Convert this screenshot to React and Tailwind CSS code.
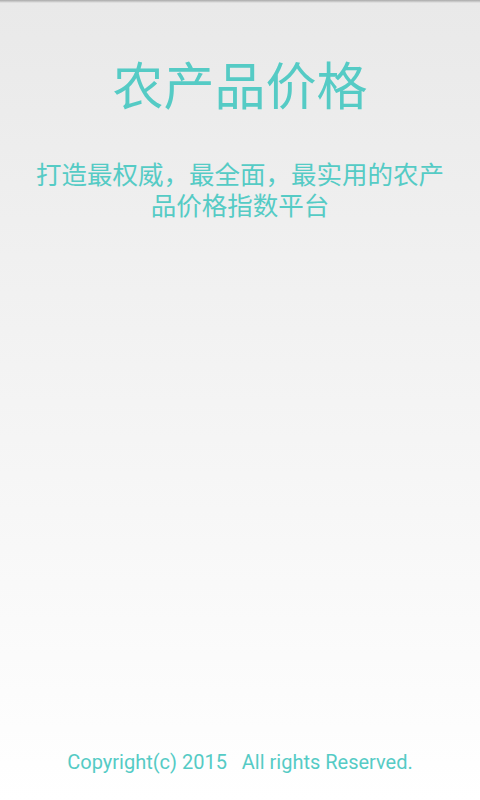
export default function App() {
    return (
        <div className="relative flex h-[800px] w-full flex-col items-center bg-gradient-to-b from-[#e9e9e9] to-[#ffffff] font-['Roboto','Noto_Sans_CJK_SC',sans-serif] text-[#55cbc5]">
            <div className="h-[3px] w-full bg-gradient-to-b from-[#a9a9a9] to-[#e9e9e9]"></div>
            <h1 className="mt-[60px] text-[51px] leading-[50px]">农产品价格</h1>
            <p className="mt-[47px] px-[30px] text-center text-[25.5px] leading-[31px]">
                打造最权威，最全面，最实用的农产品价格指数平台
            </p>
            <div className="flex-1"></div>
            <p className="mb-[27px] whitespace-pre text-[20px] leading-[22px]">Copyright(c) 2015   All rights Reserved.</p>
        </div>
    )
}
